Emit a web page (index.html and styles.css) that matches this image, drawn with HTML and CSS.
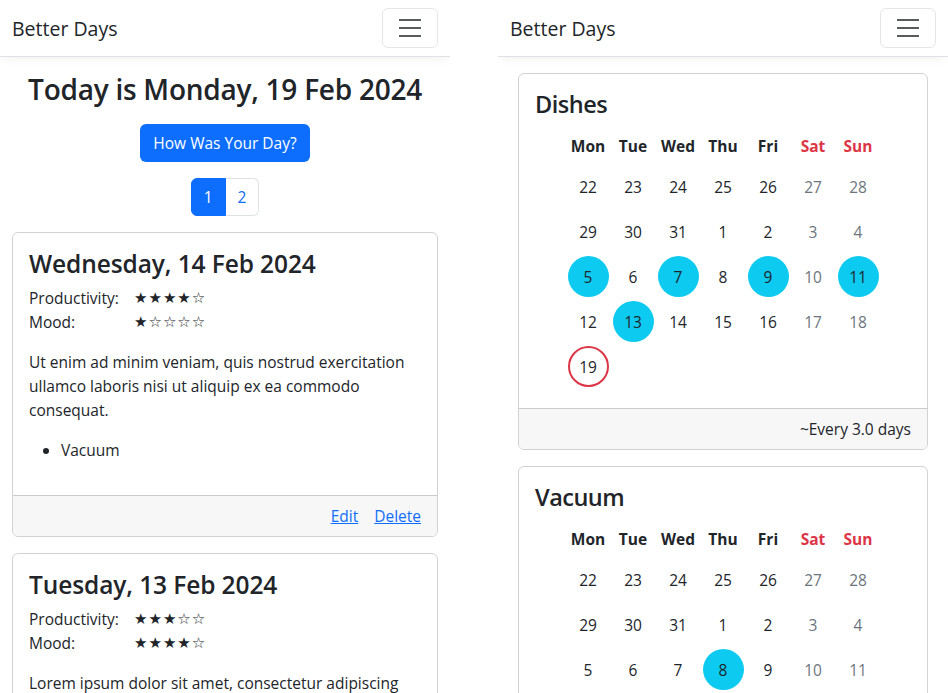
FILE: index.html
```html
<!DOCTYPE html>
<html lang="en">
<head>
<meta charset="utf-8">
<title>Better Days</title>
<link rel="stylesheet" href="styles.css">
</head>
<body>
<div class="screens">
  <section class="screen">
    <nav class="navbar">
      <span class="brand">Better Days</span>
      <button class="toggler" aria-label="Toggle navigation">
        <svg width="30" height="30" viewBox="0 0 30 30"><path d="M4 7h22M4 15h22M4 23h22" stroke="rgba(33,37,41,0.75)" stroke-width="2" stroke-linecap="butt"/></svg>
      </button>
    </nav>
    <main class="journal">
      <h1 class="today">Today is Monday, 19 Feb 2024</h1>
      <div class="center"><a class="btn-primary">How Was Your Day?</a></div>
      <ul class="pagination">
        <li class="page active">1</li>
        <li class="page">2</li>
      </ul>
      <article class="card">
        <div class="card-body">
          <h2 class="entry-title">Wednesday, 14 Feb 2024</h2>
          <div class="ratings">
            <span>Productivity:</span><span class="stars">★★★★☆</span>
            <span>Mood:</span><span class="stars">★☆☆☆☆</span>
          </div>
          <p>Ut enim ad minim veniam, quis nostrud exercitation ullamco laboris nisi ut aliquip ex ea commodo consequat.</p>
          <ul class="tasks"><li>Vacuum</li></ul>
        </div>
        <div class="card-footer actions"><a href="#">Edit</a><a href="#">Delete</a></div>
      </article>
      <article class="card">
        <div class="card-body">
          <h2 class="entry-title">Tuesday, 13 Feb 2024</h2>
          <div class="ratings">
            <span>Productivity:</span><span class="stars">★★★☆☆</span>
            <span>Mood:</span><span class="stars">★★★★☆</span>
          </div>
          <p>Lorem ipsum dolor sit amet, consectetur adipiscing elit, sed do eiusmod tempor incididunt ut labore et dolore magna aliqua.</p>
          <ul class="tasks"><li>Dishes</li></ul>
        </div>
        <div class="card-footer actions"><a href="#">Edit</a><a href="#">Delete</a></div>
      </article>
    </main>
  </section>

  <section class="screen">
    <nav class="navbar">
      <span class="brand">Better Days</span>
      <button class="toggler" aria-label="Toggle navigation">
        <svg width="30" height="30" viewBox="0 0 30 30"><path d="M4 7h22M4 15h22M4 23h22" stroke="rgba(33,37,41,0.75)" stroke-width="2" stroke-linecap="butt"/></svg>
      </button>
    </nav>
    <main class="chores">
      <article class="card">
        <div class="card-body">
          <h3 class="chore-title">Dishes</h3>
          <div class="cal">
            <div class="hd">Mon</div><div class="hd">Tue</div><div class="hd">Wed</div><div class="hd">Thu</div><div class="hd">Fri</div><div class="hd red">Sat</div><div class="hd red">Sun</div>
            <div class="day"><span>22</span></div><div class="day"><span>23</span></div><div class="day"><span>24</span></div><div class="day"><span>25</span></div><div class="day"><span>26</span></div><div class="day we"><span>27</span></div><div class="day we"><span>28</span></div>
            <div class="day"><span>29</span></div><div class="day"><span>30</span></div><div class="day"><span>31</span></div><div class="day"><span>1</span></div><div class="day"><span>2</span></div><div class="day we"><span>3</span></div><div class="day we"><span>4</span></div>
            <div class="day"><span class="done">5</span></div><div class="day"><span>6</span></div><div class="day"><span class="done">7</span></div><div class="day"><span>8</span></div><div class="day"><span class="done">9</span></div><div class="day we"><span>10</span></div><div class="day we"><span class="done">11</span></div>
            <div class="day"><span>12</span></div><div class="day"><span class="done">13</span></div><div class="day"><span>14</span></div><div class="day"><span>15</span></div><div class="day"><span>16</span></div><div class="day we"><span>17</span></div><div class="day we"><span>18</span></div>
            <div class="day"><span class="now">19</span></div>
          </div>
        </div>
        <div class="card-footer freq">~Every 3.0 days</div>
      </article>
      <article class="card">
        <div class="card-body">
          <h3 class="chore-title">Vacuum</h3>
          <div class="cal">
            <div class="hd">Mon</div><div class="hd">Tue</div><div class="hd">Wed</div><div class="hd">Thu</div><div class="hd">Fri</div><div class="hd red">Sat</div><div class="hd red">Sun</div>
            <div class="day"><span>22</span></div><div class="day"><span>23</span></div><div class="day"><span>24</span></div><div class="day"><span>25</span></div><div class="day"><span>26</span></div><div class="day we"><span>27</span></div><div class="day we"><span>28</span></div>
            <div class="day"><span>29</span></div><div class="day"><span>30</span></div><div class="day"><span>31</span></div><div class="day"><span>1</span></div><div class="day"><span>2</span></div><div class="day we"><span>3</span></div><div class="day we"><span>4</span></div>
            <div class="day"><span>5</span></div><div class="day"><span>6</span></div><div class="day"><span>7</span></div><div class="day"><span class="done">8</span></div><div class="day"><span>9</span></div><div class="day we"><span>10</span></div><div class="day we"><span>11</span></div>
            <div class="day"><span>12</span></div><div class="day"><span>13</span></div><div class="day"><span class="done">14</span></div><div class="day"><span>15</span></div><div class="day"><span>16</span></div><div class="day we"><span>17</span></div><div class="day we"><span>18</span></div>
            <div class="day"><span class="now">19</span></div>
          </div>
        </div>
        <div class="card-footer freq">~Every 6.0 days</div>
      </article>
    </main>
  </section>
</div>
</body>
</html>
```

FILE: styles.css
```css
* { box-sizing: border-box; }
html, body { margin: 0; padding: 0; overflow: hidden; background: #fff; }
body {
  font-family: "Open Sans", "Noto Sans", sans-serif;
  font-size: 15.5px;
  line-height: 24px;
  color: #212529;
}
.screens {
  display: grid;
  grid-template-columns: 450px 450px;
  column-gap: 48px;
  align-items: start;
}
.screen { overflow: hidden; padding-bottom: 20px; }

.navbar {
  height: 57px;
  display: flex;
  align-items: center;
  justify-content: space-between;
  padding: 0 12px;
  border-bottom: 1px solid #dfe1e4;
  box-shadow: 0 5px 10px -3px rgba(0, 0, 0, 0.06);
  position: relative;
}
.brand { font-size: 19.5px; line-height: 30px; margin-top: 2px; }
.toggler {
  width: 56px;
  height: 40px;
  padding: 4px 12px;
  border: 1px solid rgba(0, 0, 0, 0.1);
  border-radius: 6px;
  background: transparent;
  display: flex;
  align-items: center;
  justify-content: center;
  margin-top: -1px;
}
.toggler svg { display: block; }

.journal { padding: 16px 12px 0; }
.chores { padding: 16px 20px 0; }

h1, h2, h3 { margin: 0; font-weight: 600; line-height: 1.2; }
.today { text-align: center; font-size: 28px; letter-spacing: -0.25px; margin-bottom: 17px; }
.center { display: flex; justify-content: center; }
.btn-primary {
  display: inline-block;
  background: #0d6efd;
  color: #fff;
  border-radius: 6px;
  padding: 7px 13px;
  line-height: 24px;
}

.pagination {
  list-style: none;
  margin: 16px 0;
  padding: 0;
  display: flex;
  justify-content: center;
}
.page {
  padding: 6px 12px;
  border: 1px solid #dee2e6;
  color: #0d6efd;
  line-height: 24px;
}
.page:first-child { border-radius: 6px 0 0 6px; }
.page:last-child { border-radius: 0 6px 6px 0; border-left: 0; }
.page.active { background: #0d6efd; border-color: #0d6efd; color: #fff; }

.card {
  border: 1px solid rgba(0, 0, 0, 0.175);
  border-radius: 6px;
  margin-bottom: 16px;
  overflow: hidden;
}
.card-body { padding: 16px; }
.card-footer {
  padding: 8px 16px;
  background: #f7f7f7;
  border-top: 1px solid rgba(0, 0, 0, 0.175);
}

.entry-title { font-size: 24.5px; line-height: 29px; letter-spacing: -0.1px; margin-bottom: 8px; }
.ratings {
  display: grid;
  grid-template-columns: 105px auto;
}
.stars {
  font-family: "DejaVu Sans", sans-serif;
  font-size: 15px;
  letter-spacing: 1px;
}
.card-body p { margin: 16px 0; }
.tasks { margin: 0 0 17px; padding-left: 32px; }

.actions { display: flex; justify-content: flex-end; gap: 16px; }
.actions a { color: #0d6efd; text-decoration: underline; }

.chore-title { font-size: 23.5px; letter-spacing: -0.5px; margin-bottom: 8px; }
.cal {
  display: grid;
  grid-template-columns: repeat(7, 45px);
  grid-template-rows: 38px;
  grid-auto-rows: 45px;
  justify-content: center;
  padding-bottom: 3px;
}
.hd {
  font-weight: 700;
  display: flex;
  align-items: center;
  justify-content: center;
  padding-top: 2px;
}
.hd.red { color: #dc3545; }
.day { display: flex; align-items: center; justify-content: center; }
.day span {
  width: 41px;
  height: 41px;
  border-radius: 50%;
  display: flex;
  align-items: center;
  justify-content: center;
}
.day.we { color: #6c757d; }
.day span.done { background: #0dcaf0; color: #212529; }
.day span.now { border: 2px solid #dc3545; color: #212529; }
.freq { text-align: right; }
```
